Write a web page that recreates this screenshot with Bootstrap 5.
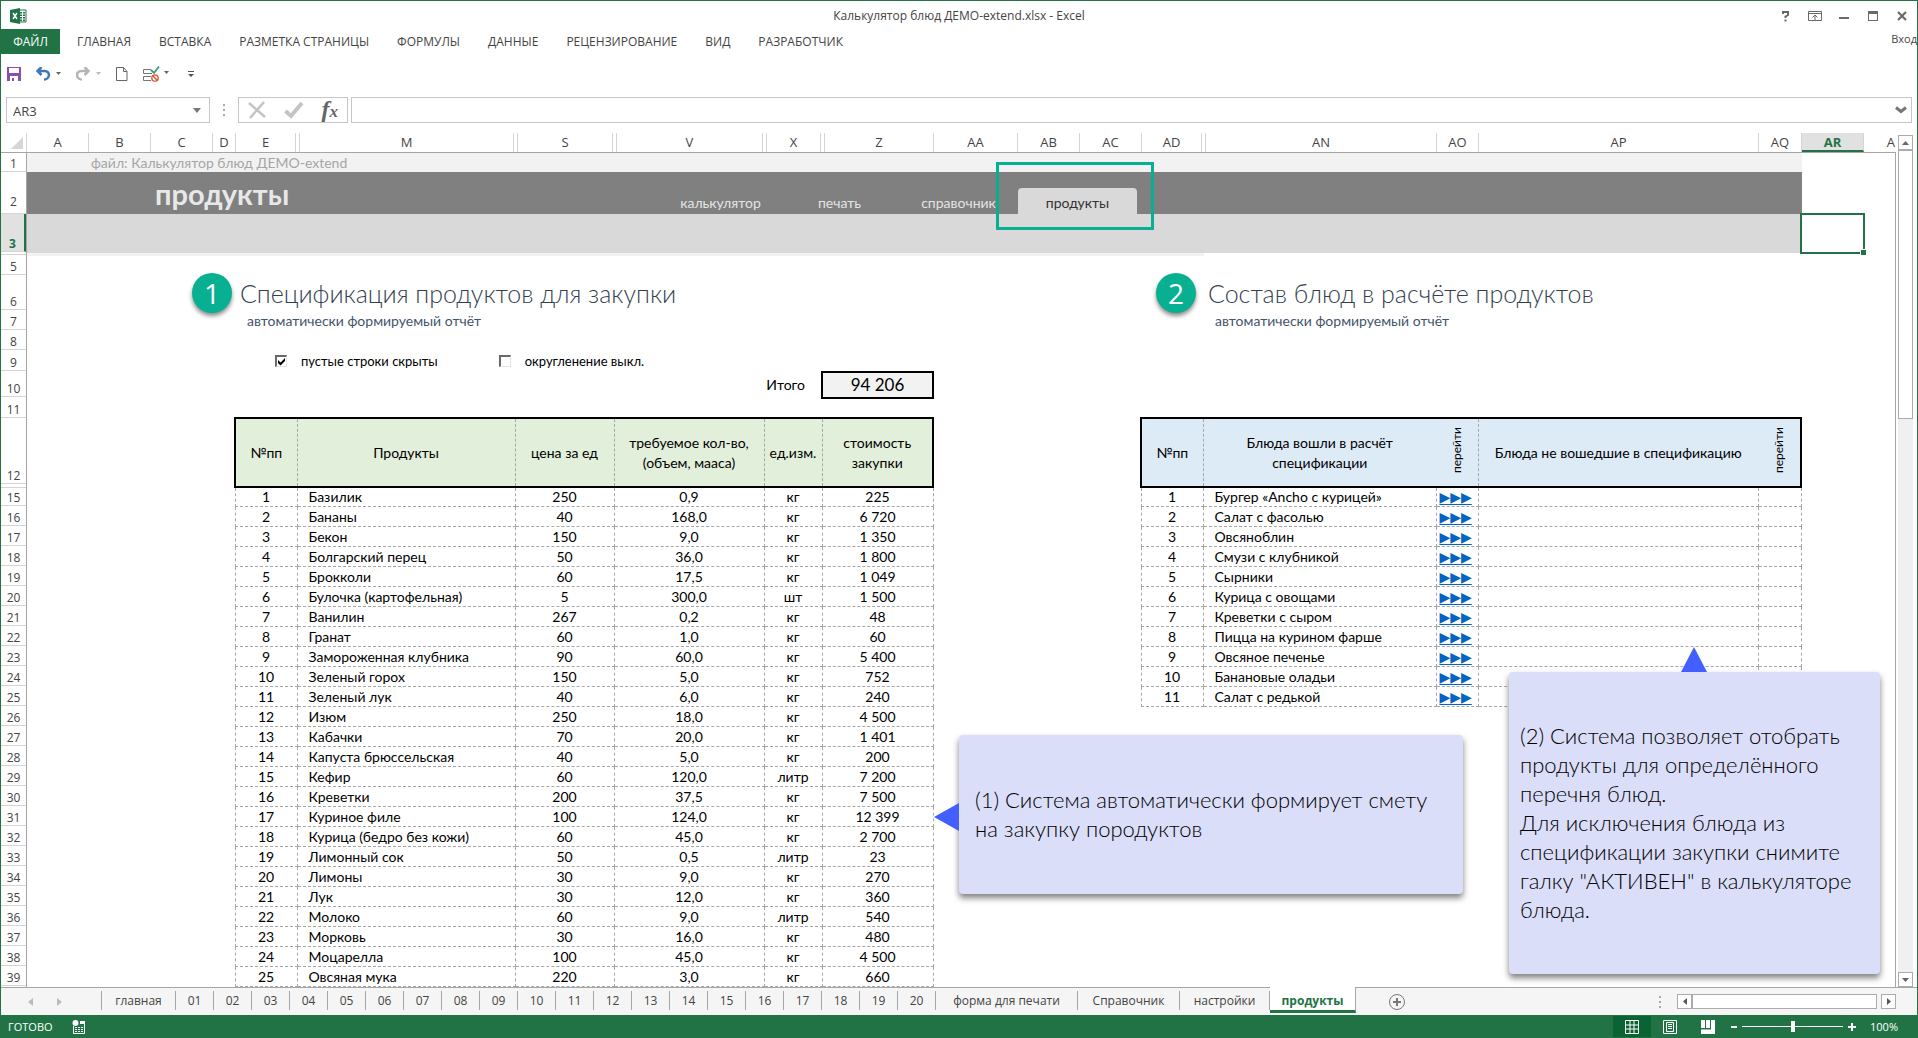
<!DOCTYPE html>
<html lang="ru">
<head>
<meta charset="utf-8">
<meta name="viewport" content="width=device-width, initial-scale=1">
<title>Калькулятор блюд ДЕМО-extend.xlsx - Excel</title>
<link href="https://cdn.jsdelivr.net/npm/bootstrap@5.3.0/dist/css/bootstrap.min.css" rel="stylesheet">
<style>
:root { --xl: #217346; --line: #a6a6a6; --soft: #d4d4d4; --mint: #07b091; }
body { font-family: "Open Sans", "Noto Sans", sans-serif; font-size: 12px; line-height: 16px; color: #444; background: #fff; }
button { font: inherit; color: inherit; background: none; border: 0; padding: 0; }
svg { display: block; flex: none; }
.app-window { border: 1px solid var(--xl); border-bottom: 0; }

/* title bar, ribbon, quick access, formula bar */
.title-bar { height: 28px; padding: 2px 26px 0 9px; }
.title-tools { gap: 15px; }
.ribbon { height: 25px; }
.ribbon a { color: #444; text-decoration: none; padding: 0 14px; white-space: nowrap; }
.ribbon .file-tab { background: var(--xl); color: #fff; width: 59px; padding: 0; margin-right: 3px; text-align: center; line-height: 25px; }
.sign-in { height: 22px; font-size: 11px; }
.quick-bar { height: 43px; padding: 0 6px 3px; gap: 15px; }
.formula-bar { height: 26px; padding: 0 5px; }
.boxed { border: 1px solid #c6c6c6; height: 26px; }
.name-box { width: 204px; }
.name-box input, .formula-input input { border: 0; outline: 0; width: 100%; color: #444; background: none; padding: 2px 6px 0; font-size: 13px; }
.bar-dots { margin: 0 13px; }
.fx-box { width: 110px; padding: 0 9px; margin-right: 3px; }
.fx-glyph { font: italic 700 24px/20px "Liberation Serif", serif; color: #666; }
.fx-glyph small { font-size: 17px; }

/* column and row headings */
.col-heads { height: 30px; padding-top: 10px; border-bottom: 1px solid var(--line); margin-right: 21px; overflow: hidden; font-size: 13px; }
.col-heads > div { flex: none; text-align: center; line-height: 19px; border-right: 1px solid var(--soft); }
.col-heads .rest { flex: 1 1 0; min-width: 0; overflow: hidden; border: 0; padding-right: 1px; text-align: right; }
.col-heads .corner { width: 26px; display: flex; justify-content: end; align-items: end; padding: 0 3px 3px 0; }
.col-heads .picked { background: #e1e1e1; color: var(--xl); font-weight: 700; border-bottom: 2px solid var(--xl); line-height: 18px; }
.work-area { min-height: 0; }
.row-heads { width: 26px; flex: none; border-right: 1px solid var(--line); overflow: hidden; }
.row-heads > div { display: flex; align-items: end; justify-content: center; border-bottom: 1px solid var(--soft); line-height: 15px; flex: none; }
.row-heads .picked { background: #e1e1e1; color: var(--xl); font-weight: 700; border-right: 2px solid var(--xl); }

/* worksheet */
.sheet { font-family: Lato, "Noto Sans", sans-serif; font-size: 14px; line-height: 20px; color: #000; border-right: 1px solid var(--line); overflow: hidden; }
.band { width: 1775px; }
.band-file { height: 19px; background: #f2f2f2; color: var(--line); padding-left: 64px; }
.band-menu { height: 42px; background: #808080; }
.band-menu h1 { font-size: 29px; line-height: 40px; font-weight: 700; color: #e8e8e8; margin: 0 0 0 128px; width: 506px; }
.band-menu a { color: #e4e4e4; text-decoration: none; text-align: center; width: 119px; line-height: 26px; height: 26px; padding-top: 2px; }
.band-menu a.current { background: #d9d9d9; color: #333; border-radius: 4px 4px 0 0; }
.band-select { height: 39px; background: #d9d9d9; }
.band-thin { height: 3px; width: 1177px; background: #f2f2f2; }
.frame-mark { position: absolute; left: 969px; top: 9px; width: 158px; height: 68px; border: 3px solid var(--mint); }
.cell-cursor { position: absolute; left: 1773px; top: 60px; width: 65px; height: 41px; border: 2px solid var(--xl); }
.cell-cursor::after { content: ""; position: absolute; right: -3px; bottom: -3px; width: 6px; height: 6px; background: var(--xl); border: 1px solid #fff; border-width: 1px 0 0 1px; }
.report-head { height: 161px; padding-top: 17px; }
.step-badge { width: 40px; height: 40px; flex: none; border-radius: 50%; background: var(--mint); color: #fff; font: 28px/40px "Open Sans", sans-serif; text-align: center; box-shadow: 0 3px 4px rgba(0,0,0,.45); }
.report-one { margin-left: 165px; width: 742px; }
.report-two { margin-left: 222px; width: 646px; }
.report-two .step-badge { margin-right: 4px; }
.report-title { font-size: 25px; line-height: 32px; font-weight: 300; color: #333f50; margin: 0; }
.report-note { color: #44546a; line-height: 20px; margin: 2px 0 0 7px; }
.option-line { height: 20px; margin-top: 20px; padding-left: 83px; font-size: 13px; }
.option-line input { appearance: none; width: 12px; height: 12px; margin: 0; border: 1px solid #e3e3e3; border-top: 2px solid #696969; border-left: 2px solid #696969; background: #fff; }
.option-line input:checked { background: #fff url("data:image/svg+xml,%3Csvg xmlns='http://www.w3.org/2000/svg' viewBox='0 0 9 9'%3E%3Cpath d='M1 3v3l2.500 2.500L8 4V1L3.500 5.500z'/%3E%3C/svg%3E") center / 9px no-repeat; }
.option-line label { margin: 0 61px 0 14px; }
.total-line span { margin-right: 16px; }
.total-box { width: 113px; height: 28px; border: 2px solid #000; background: #f2f2f2; font-size: 17px; line-height: 24px; text-align: center; }
.data-grid { table-layout: fixed; border-collapse: collapse; text-align: center; margin: 0; }
.data-grid th { font-weight: 400; height: 69px; padding: 0 4px; vertical-align: middle; border: 1px dashed var(--line); border-top: 2px solid #000; border-bottom: 2px solid #000; }
.data-grid th:first-child { border-left: 2px solid #000; }
.data-grid th:last-child { border-right: 2px solid #000; }
.data-grid th.open-start { border-left: 0; }
.data-grid th.open-end { border-right: 0; }
.data-grid td { height: 20px; line-height: 19px; padding: 0; border: 1px dashed var(--line); }
.data-grid tbody tr:first-child td { height: 19px; line-height: 18px; }
.data-grid .label-cell { text-align: left; padding-left: 11px; }
.report-one .data-grid { width: 698px; }
.report-two .data-grid { width: 660px; margin-left: -16px; }
.head-green th { background: #e2efda; }
.head-blue th { background: #ddebf7; }
.turned { writing-mode: vertical-rl; transform: rotate(180deg); display: inline-block; font-size: 12px; }
.jump { font: 14px/18px "DejaVu Sans", sans-serif; color: #0563c1; display: block; text-align: left; padding-left: 3px; text-underline-offset: 2px; }
.callout-box { position: absolute; background: #dbdef9; border-radius: 4px; box-shadow: 0 4px 6px rgba(0,0,0,.5); font-size: 22px; line-height: 29px; font-weight: 300; color: #000; }
.callout-box svg { position: absolute; }
.callout-one { left: 932px; top: 582px; width: 504px; height: 159px; padding: 0 16px 2px; }
.callout-one svg { left: -25px; top: 68px; }
.callout-two { left: 1482px; top: 519px; width: 371px; height: 302px; padding: 0 11px 2px; }
.callout-two svg { left: 172px; top: -25px; }

/* scroll bars, sheet tabs, status bar */
.v-scroll { width: 21px; flex: none; padding: 0 2px; margin-top: -18px; }
.v-scroll button, .h-scroll button { border: 1px solid #ababab; width: 15px; height: 15px; display: grid; place-items: center; background: #fff; flex: none; }
.v-track { background: #f0f0f0; width: 15px; }
.v-thumb { height: 269px; border: 1px solid #ababab; background: #fff; }
.sheet-tabs { height: 28px; background: #f5f5f5; border-top: 1px solid var(--line); }
.tab-arrows { width: 100px; gap: 24px; padding-right: 12px; }
.sheet-tabs a { color: #444; text-decoration: none; text-align: center; border-right: 1px solid var(--line); line-height: 19px; height: 19px; margin-top: 3px; flex: none; white-space: nowrap; width: 38px; }
.sheet-tabs .first-tab { border-left: 1px solid var(--line); width: 75px; }
.sheet-tabs a.current { background: #fff; color: var(--xl); font-weight: 700; border-bottom: 3px solid var(--xl); height: 26px; line-height: 27px; margin-top: -1px; width: 86px; }
.h-scroll { margin-right: 21px; }
.h-thumb { width: 185px; height: 15px; border: 1px solid #ababab; background: #fff; }
.status-bar { height: 23px; background: var(--xl); color: #fff; padding: 0 19px 0 7px; font-size: 11px; }
.status-mark { margin-left: 19px; }
.view-btn { width: 38px; height: 21px; display: grid; place-items: center; }
.view-btn.active { background: #0a6332; }
.zoom-range { appearance: none; width: 101px; height: 12px; margin: 0 5px; background: linear-gradient(#fff,#fff) center / 100% 1px no-repeat; }
.zoom-range::-webkit-slider-thumb { appearance: none; width: 4px; height: 11px; background: #fff; }
.zoom-text { margin-left: 14px; }
</style>
</head>
<body>
<div class="app-window d-flex flex-column vh-100 overflow-hidden">
  <header>
    <div class="title-bar d-flex align-items-center position-relative">
      <svg width="17" height="16" viewBox="0 0 17 16"><path d="M8 2h8v12H8z" fill="#fff" stroke="#217346"/><path d="M10 4h2v1.500h-2zm3 0h2v1.500h-2zm-3 2.500h2V8h-2zm3 0h2V8h-2zM10 9h2v1.500h-2zm3 0h2v1.500h-2zm-3 2.500h2V13h-2zm3 0h2V13h-2z" fill="#217346"/><path d="M0 2l10-2v16L0 14z" fill="#217346"/><path d="M3 5l4 6M7 5l-4 6" stroke="#fff" stroke-width="1.500"/></svg>
      <span class="flex-grow-1 text-center">Калькулятор блюд ДЕМО-extend.xlsx - Excel</span>
      <div class="title-tools d-flex align-items-center position-absolute end-0 me-2">
        <button aria-label="Справка"><svg width="14" height="14" viewBox="0 0 14 14" fill="none" stroke="#6a6a6a" stroke-width="2"><path d="M4 5V3h5v3L6.500 7.500V9M6.500 10.500v2"/></svg></button>
        <button aria-label="Параметры ленты"><svg width="14" height="14" viewBox="0 0 14 14" fill="none" stroke="#6a6a6a"><path d="M.5 2.500h13v9H.5zM.5 4.500h13M7 11V6.500M4.500 8.500L7 6l2.500 2.500"/></svg></button>
        <button aria-label="Свернуть"><svg width="14" height="14" viewBox="0 0 14 14"><path d="M2 8h10v2H2z" fill="#6a6a6a"/></svg></button>
        <button aria-label="Развернуть"><svg width="14" height="14" viewBox="0 0 14 14"><path d="M2 2h10v10H2zM3 5v6h8V5z" fill="#6a6a6a" fill-rule="evenodd"/></svg></button>
        <button aria-label="Закрыть"><svg width="14" height="14" viewBox="0 0 14 14"><path d="M3 3l8 8M11 3l-8 8" stroke="#6a6a6a" stroke-width="2.200"/></svg></button>
      </div>
    </div>
    <nav class="ribbon d-flex align-items-center">
      <a href="#" class="file-tab">ФАЙЛ</a><a href="#">ГЛАВНАЯ</a><a href="#">ВСТАВКА</a><a href="#">РАЗМЕТКА СТРАНИЦЫ</a><a href="#">ФОРМУЛЫ</a><a href="#">ДАННЫЕ</a><a href="#">РЕЦЕНЗИРОВАНИЕ</a><a href="#">ВИД</a><a href="#">РАЗРАБОТЧИК</a>
      <span class="sign-in ms-auto">Вход</span>
    </nav>
    <div class="quick-bar d-flex align-items-center">
      <button aria-label="Сохранить"><svg width="14" height="14" viewBox="0 0 14 14"><path d="M0 0h14v14H0zM2 1v6h10V1zM3 9v5h8V9z" fill="#8a4fae" fill-rule="evenodd"/><path d="M2 6h10v2H2zM5 11h2v3H5z" fill="#8a4fae"/></svg></button>
      <button aria-label="Отменить"><svg width="25" height="14" viewBox="0 0 25 14"><path d="M5.500 0L1.500 4l4 4M2 4h6.500c6.500 0 5.500 8.500-.5 8.500" fill="none" stroke="#3b78b5" stroke-width="2.500"/><path d="M20 5h5l-2.500 3z" fill="#666"/></svg></button>
      <button aria-label="Вернуть"><svg width="25" height="14" viewBox="0 0 25 14"><path d="M8.500 0l4 4-4 4M12 4H5.500c-6.500 0-5.500 8.500.5 8.500" fill="none" stroke="#b5b5b5" stroke-width="2.500"/><path d="M20 5h5l-2.500 3z" fill="#bbb"/></svg></button>
      <button aria-label="Создать"><svg width="12" height="14" viewBox="0 0 12 14" fill="none" stroke="#666"><path d="M.5.5h7l3.500 4v9H.5zM7.500.5v4H11"/></svg></button>
      <button aria-label="Проверка данных"><svg width="26" height="16" viewBox="0 0 26 16" fill="none"><path d="M8 3.500H.5v4H9M8 10.500H.5v4H8" stroke="#777"/><path d="M8 4l3 3 5-6.500" stroke="#3f9c78" stroke-width="1.800"/><circle cx="12" cy="12" r="3.200" stroke="#d9552f" stroke-width="1.300"/><path d="M9.800 9.800l4.400 4.400" stroke="#d9552f" stroke-width="1.300"/><path d="M21 5h5l-2.500 3z" fill="#666"/></svg></button>
      <button aria-label="Настройка панели" class="ps-1"><svg width="6" height="8" viewBox="0 0 6 8" fill="#555"><path d="M0 1h6v1H0zM0 4h6L3 7z"/></svg></button>
    </div>
    <div class="formula-bar d-flex align-items-center">
      <div class="boxed name-box d-flex align-items-center">
        <input type="text" value="AR3" aria-label="Поле имени">
        <button aria-label="Список имён" class="me-2"><svg width="8" height="5" viewBox="0 0 8 5"><path d="M0 0h8L4 5z" fill="#777"/></svg></button>
      </div>
      <svg class="bar-dots" width="2" height="12" viewBox="0 0 2 12" fill="#aaa"><path d="M0 0h2v2H0zM0 5h2v2H0zM0 10h2v2H0z"/></svg>
      <div class="boxed fx-box d-flex align-items-center justify-content-between">
        <button aria-label="Отмена"><svg width="18" height="18" viewBox="0 0 18 18"><path d="M1 2l16 14M16 1L2 17" stroke="#c4c4c4" stroke-width="2.500"/></svg></button>
        <button aria-label="Ввод"><svg width="20" height="18" viewBox="0 0 20 18"><path d="M1.500 10L7 15 18 2" fill="none" stroke="#c4c4c4" stroke-width="4"/></svg></button>
        <button aria-label="Вставить функцию" class="fx-glyph">f<small>x</small></button>
      </div>
      <div class="boxed formula-input flex-grow-1 d-flex align-items-center">
        <input type="text" aria-label="Строка формул">
        <button aria-label="Развернуть строку формул" class="me-1"><svg width="12" height="8" viewBox="0 0 12 8"><path d="M1 1.500l5 4 5-4" fill="none" stroke="#777" stroke-width="3"/></svg></button>
      </div>
    </div>
  </header>

  <div class="col-heads d-flex" id="colHeads"></div>

  <main class="work-area d-flex flex-grow-1">
    <div class="row-heads d-flex flex-column" id="rowHeads"></div>
    <div class="sheet position-relative flex-grow-1">
      <div class="band band-file">файл: Калькулятор блюд ДЕМО-extend</div>
      <nav class="band band-menu d-flex align-items-end">
        <h1>продукты</h1>
        <a href="#">калькулятор</a><a href="#">печать</a><a href="#">справочник</a><a href="#" class="current">продукты</a>
      </nav>
      <div class="band band-select"></div>
      <div class="band-thin"></div>
      <div class="frame-mark"></div>
      <div class="cell-cursor"></div>

      <div class="d-flex align-items-start">
        <section class="report-one">
          <div class="report-head">
            <div class="d-flex">
              <div class="step-badge">1</div>
              <div class="ps-2 pt-1"><h2 class="report-title">Спецификация продуктов для закупки</h2><p class="report-note">автоматически формируемый отчёт</p></div>
            </div>
            <div class="option-line d-flex align-items-center">
              <input type="checkbox" id="hideEmpty" checked><label for="hideEmpty">пустые строки скрыты</label>
              <input type="checkbox" id="rounding"><label for="rounding">округленение выкл.</label>
            </div>
            <div class="total-line d-flex justify-content-end align-items-center"><span>Итого</span><output class="total-box">94 206</output></div>
          </div>
          <table class="data-grid ms-auto head-green">
            <colgroup><col style="width:62px"><col style="width:218px"><col style="width:99px"><col style="width:150px"><col style="width:58px"><col style="width:111px"></colgroup>
            <thead><tr><th>№пп</th><th>Продукты</th><th>цена за ед</th><th>требуемое кол-во, (объем, мааса)</th><th class="px-0">ед.изм.</th><th>стоимость закупки</th></tr></thead>
            <tbody id="products"></tbody>
          </table>
        </section>
        <section class="report-two">
          <div class="report-head">
            <div class="d-flex">
              <div class="step-badge">2</div>
              <div class="ps-2 pt-1"><h2 class="report-title">Состав блюд в расчёте продуктов</h2><p class="report-note">автоматически формируемый отчёт</p></div>
            </div>
          </div>
          <table class="data-grid head-blue">
            <colgroup><col style="width:62px"><col style="width:233px"><col style="width:42px"><col style="width:280px"><col style="width:43px"></colgroup>
            <thead><tr><th>№пп</th><th class="open-end px-4">Блюда вошли в расчёт спецификации</th><th class="open-start"><span class="turned">перейти</span></th><th class="open-end">Блюда не вошедшие в спецификацию</th><th class="open-start"><span class="turned">перейти</span></th></tr></thead>
            <tbody id="dishes"></tbody>
          </table>
        </section>
      </div>

      <aside class="callout-box callout-one d-flex align-items-center">
        <svg width="25" height="28" viewBox="0 0 25 28"><path d="M0 14L25 0v28z" fill="#435fff"/></svg>
        <div>(1) Система автоматически формирует смету<br>на закупку породуктов</div>
      </aside>
      <aside class="callout-box callout-two d-flex align-items-center">
        <svg width="26" height="25" viewBox="0 0 26 25"><path d="M13 0l13 25H0z" fill="#435fff"/></svg>
        <div>(2) Система позволяет отобрать<br>продукты для определённого<br>перечня блюд.<br>Для исключения блюда из<br>спецификации закупки снимите<br>галку "АКТИВЕН" в калькуляторе<br>блюда.</div>
      </aside>
    </div>
    <div class="v-scroll d-flex flex-column">
      <button aria-label="Вверх"><svg width="7" height="4"><path d="M0 4h7L3.500 0z" fill="#666"/></svg></button>
      <div class="v-track flex-grow-1"><div class="v-thumb"></div></div>
      <button aria-label="Вниз"><svg width="7" height="4"><path d="M0 0h7L3.500 4z" fill="#666"/></svg></button>
    </div>
  </main>

  <footer>
    <div class="sheet-tabs d-flex">
      <div class="d-flex align-items-center justify-content-center tab-arrows">
        <svg width="5" height="8"><path d="M5 0v8L0 4z" fill="#bbb"/></svg><svg width="5" height="8"><path d="M0 0v8l5-4z" fill="#bbb"/></svg>
      </div>
      <nav class="d-flex" id="sheetTabs"></nav>
      <button aria-label="Новый лист" class="ms-4 ps-2"><svg width="18" height="18" viewBox="0 0 18 18" fill="none" stroke="#777"><circle cx="9" cy="9" r="7.500"/><path d="M9 5v8M5 9h8" stroke-width="2"/></svg></button>
      <div class="h-scroll d-flex align-items-center ms-auto">
        <svg class="me-3" width="2" height="12" viewBox="0 0 2 12" fill="#aaa"><path d="M0 0h2v2H0zM0 5h2v2H0zM0 10h2v2H0z"/></svg>
        <button aria-label="Влево"><svg width="4" height="7"><path d="M4 0v7L0 3.500z" fill="#555"/></svg></button>
        <div class="h-thumb"></div>
        <button aria-label="Вправо" class="ms-1"><svg width="4" height="7"><path d="M0 0v7l4-3.500z" fill="#555"/></svg></button>
      </div>
    </div>
    <div class="status-bar d-flex align-items-center">
      <span>ГОТОВО</span>
      <svg class="status-mark" width="14" height="14" viewBox="0 0 14 14"><path d="M8 1h5v3H8z" fill="#fff"/><path d="M1.500 6v7.500h11V4" fill="none" stroke="#fff"/><circle cx="3.500" cy="3" r="3" fill="#fff"/><path d="M3 7h2v1H3zm3 0h2v1H6zm3 0h2v1H9zM3 9h2v1H3zm3 0h2v1H6zm3 0h2v1H9zm-6 2h2v1H3zm3 0h2v1H6zm3 0h2v1H9z" fill="#fff"/></svg>
      <div class="ms-auto d-flex align-items-center">
        <button class="view-btn active" aria-label="Обычный"><svg width="14" height="14" viewBox="0 0 14 14" fill="none" stroke="#fff"><path d="M.5.5h13v13H.5zM.5 5h13M.5 9h13M5 .5v13M9 .5v13"/></svg></button>
        <button class="view-btn" aria-label="Разметка страницы"><svg width="14" height="14" viewBox="0 0 14 14" fill="none" stroke="#fff"><path d="M.5.5h13v13H.5zM3.500 2.500h7v9h-7zM5 4.500h4M5 6.500h4M5 8.500h4"/></svg></button>
        <button class="view-btn" aria-label="Страничный"><svg width="14" height="14" viewBox="0 0 14 14"><path d="M0 0h4v8H0zM5 0h4v8H5zM10 0h4v14H0V9.500h10z" fill="#fff"/></svg></button>
        <button aria-label="Уменьшить" class="ms-1"><svg width="6" height="2"><path d="M0 0h6v2H0z" fill="#fff"/></svg></button>
        <input class="zoom-range" type="range" min="0" max="100" value="50" aria-label="Масштаб">
        <button aria-label="Увеличить"><svg width="8" height="8"><path d="M3 0h2v3h3v2H5v3H3V5H0V3h3z" fill="#fff"/></svg></button>
        <span class="zoom-text">100%</span>
      </div>
    </div>
  </footer>
</div>
<script>
const cols = [["A",62],["B",62],["C",62],["D",23],["E",60],["",4],["M",214],["",4],["S",95],["",4],["V",146],["",4],["X",54],["",4],["Z",109],["AA",84],["AB",62],["AC",62],["AD",60],["",4],["AN",231],["AO",42],["AP",280],["AQ",43],["AR",62]];
document.getElementById("colHeads").innerHTML =
  '<div class="corner"><svg width="12" height="12"><path d="M12 0v12H0z" fill="#d6d6d6"/></svg></div>' +
  cols.map(([t, w]) => `<div class="${t === "AR" ? "picked" : ""}" style="width:${w}px">${t}</div>`).join("") +
  '<div class="rest">A</div>';

const rows = [["1",19],["2",42],["3",38],["",3],["5",20],["6",35],["7",20],["8",20],["9",21],["10",26],["11",21],["12",66],["",4],["15",18]];
for (let i = 16; i < 40; i++) rows.push([String(i), 20]);
document.getElementById("rowHeads").innerHTML =
  rows.map(([t, h]) => `<div class="${t === "3" ? "picked" : t === "2" ? "pb-1" : ""}" style="height:${h}px">${t}</div>`).join("");

const products = `Базилик|250|0,9|кг|225
Бананы|40|168,0|кг|6 720
Бекон|150|9,0|кг|1 350
Болгарский перец|50|36,0|кг|1 800
Брокколи|60|17,5|кг|1 049
Булочка (картофельная)|5|300,0|шт|1 500
Ванилин|267|0,2|кг|48
Гранат|60|1,0|кг|60
Замороженная клубника|90|60,0|кг|5 400
Зеленый горох|150|5,0|кг|752
Зеленый лук|40|6,0|кг|240
Изюм|250|18,0|кг|4 500
Кабачки|70|20,0|кг|1 401
Капуста брюссельская|40|5,0|кг|200
Кефир|60|120,0|литр|7 200
Креветки|200|37,5|кг|7 500
Куриное филе|100|124,0|кг|12 399
Курица (бедро без кожи)|60|45,0|кг|2 700
Лимонный сок|50|0,5|литр|23
Лимоны|30|9,0|кг|270
Лук|30|12,0|кг|360
Молоко|60|9,0|литр|540
Морковь|30|16,0|кг|480
Моцарелла|100|45,0|кг|4 500
Овсяная мука|220|3,0|кг|660`.split("\n").map(r => r.split("|"));
document.getElementById("products").innerHTML = products.map(([name, ...rest], i) =>
  `<tr><td>${i + 1}</td><td class="label-cell">${name}</td>${rest.map(v => `<td>${v}</td>`).join("")}</tr>`).join("");

const dishes = ["Бургер «Ancho с курицей»","Салат с фасолью","Овсяноблин","Смузи с клубникой","Сырники","Курица с овощами","Креветки с сыром","Пицца на курином фарше","Овсяное печенье","Банановые оладьи","Салат с редькой"];
document.getElementById("dishes").innerHTML = dishes.map((name, i) =>
  `<tr><td>${i + 1}</td><td class="label-cell">${name}</td><td><a href="#" class="jump">▶▶▶</a></td><td></td><td></td></tr>`).join("");

const tabs = ["главная"];
for (let i = 1; i <= 20; i++) tabs.push(String(i).padStart(2, "0"));
const wide = { "форма для печати": 142, "Справочник": 102, "настройки": 90 };
document.getElementById("sheetTabs").innerHTML =
  tabs.map((t, i) => `<a href="#" class="${i ? "" : "first-tab"}">${t}</a>`).join("") +
  Object.entries(wide).map(([t, w]) => `<a href="#" style="width:${w}px">${t}</a>`).join("") +
  '<a href="#" class="current">продукты</a>';
</script>
<script src="https://cdn.jsdelivr.net/npm/bootstrap@5.3.0/dist/js/bootstrap.bundle.min.js"></script>
</body>
</html>
